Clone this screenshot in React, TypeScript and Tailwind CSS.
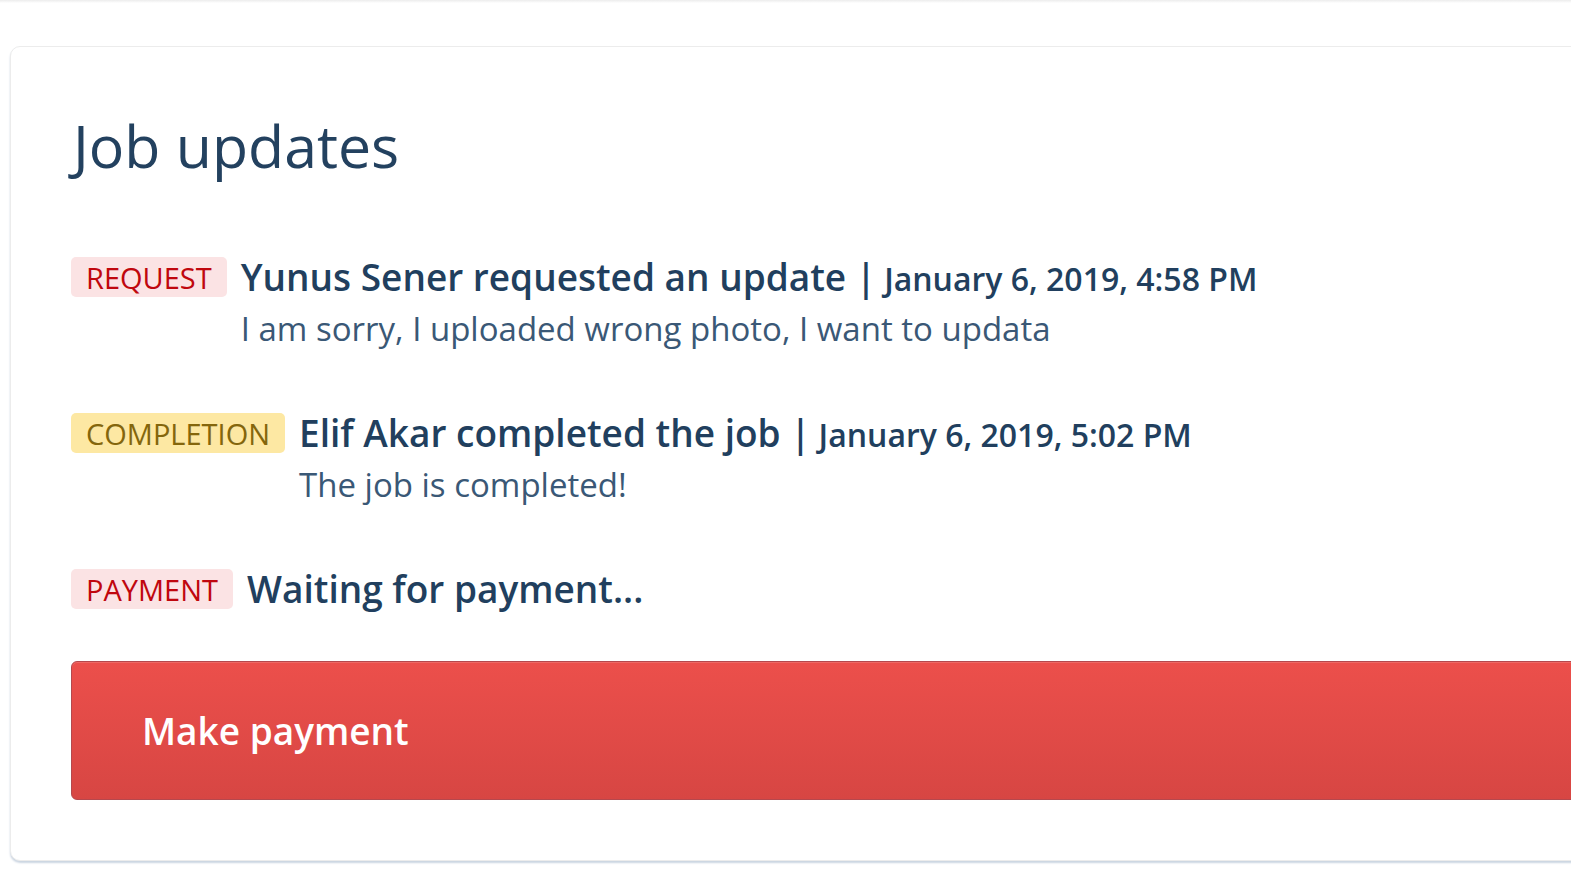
import React from "react";

const font = { fontFamily: '"Open Sans", "Noto Sans", sans-serif' };

function Badge({ label, tone }: { label: string; tone: "red" | "yellow" }) {
  const cls =
    tone === "red"
      ? "bg-[#fbe3e4] text-[#c0070e]"
      : "bg-[#fde8a3] text-[#84660c]";
  return (
    <span
      className={`${cls} shrink-0 rounded-[5px] h-[40px] px-[15px] flex items-center text-[29px] leading-none`}
    >
      {label}
    </span>
  );
}

function Update({
  label,
  tone,
  title,
  date,
  body,
}: {
  label: string;
  tone: "red" | "yellow";
  title: string;
  date?: string;
  body?: string;
}) {
  return (
    <div className="flex items-start gap-[14px]">
      <Badge label={label} tone={tone} />
      <div className="flex flex-col">
        <div className="flex items-baseline h-[40px] text-[#213f5e]">
          <span className="text-[37px] font-semibold leading-[40px] whitespace-nowrap">
            {title}
            {date ? " | " : ""}
          </span>
          {date && (
            <span className="text-[32px] font-semibold leading-[40px] ml-[8px] whitespace-nowrap">
              {date}
            </span>
          )}
        </div>
        {body && (
          <div className="mt-[12px] text-[33px] leading-[40px] font-normal text-[#3a5876] whitespace-nowrap">
            {body}
          </div>
        )}
      </div>
    </div>
  );
}

export default function App() {
  return (
    <div className="min-h-screen bg-white overflow-hidden" style={font}>
      <div className="h-[3px] bg-gradient-to-b from-[#ececec] to-white" />
      <div className="mt-[43px] ml-[10px] w-[1700px] rounded-[10px] border border-[#ececec] bg-white shadow-[0_2px_2px_#cbd5e1] px-[60px] pt-[58px] pb-[60px]">
        <h1 className="text-[59px] leading-[80px] text-[#23415f] pl-[2px]">Job updates</h1>
        <div className="mt-[72px] flex flex-col gap-[64px]">
          <Update
            label="REQUEST"
            tone="red"
            title="Yunus Sener requested an update"
            date="January 6, 2019, 4:58 PM"
            body="I am sorry, I uploaded wrong photo, I want to updata"
          />
          <Update
            label="COMPLETION"
            tone="yellow"
            title="Elif Akar completed the job"
            date="January 6, 2019, 5:02 PM"
            body="The job is completed!"
          />
          <Update label="PAYMENT" tone="red" title="Waiting for payment..." />
        </div>
        <button className="mt-[52px] w-[1560px] h-[139px] flex items-center rounded-[6px] border border-[#b5484d] bg-gradient-to-b from-[#ec4f4b] to-[#d74643] pl-[70px] text-white text-[37px] font-semibold shadow-[inset_0_1px_0_rgba(255,255,255,0.15)]">
          Make payment
        </button>
      </div>
    </div>
  );
}
